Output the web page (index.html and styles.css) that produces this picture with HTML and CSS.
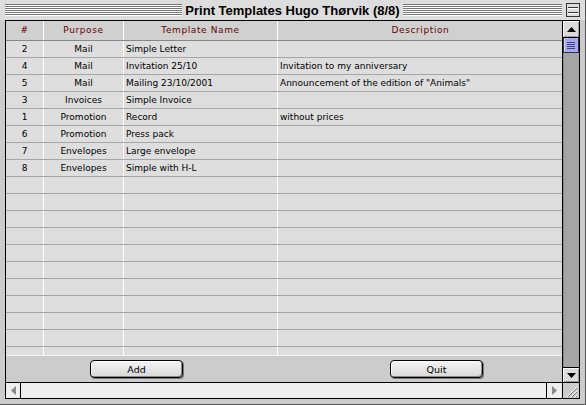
FILE: index.html
```html
<!DOCTYPE html>
<html>
<head>
<meta charset="utf-8">
<link rel="stylesheet" href="styles.css">
</head>
<body>
<div class="window">
  <div class="titlebar">
    <div class="stripes"></div>
    <div class="title">Print Templates Hugo Thørvik (8/8)</div>
    <div class="tright">
      <div class="stripes"></div>
      <div class="collapse"><span></span><span></span></div>
    </div>
  </div>
  <div class="frame">
    <div class="upper">
      <div class="main">
        <div class="list">
          <div class="row head">
            <div class="c c1">#</div>
            <div class="c c2">Purpose</div>
            <div class="c c3">Template Name</div>
            <div class="c c4 center">Description</div>
          </div>
          <div class="row"><div class="c c1">2</div><div class="c c2">Mail</div><div class="c c3">Simple Letter</div><div class="c c4"></div></div>
          <div class="row"><div class="c c1">4</div><div class="c c2">Mail</div><div class="c c3">Invitation 25/10</div><div class="c c4">Invitation to my anniversary</div></div>
          <div class="row"><div class="c c1">5</div><div class="c c2">Mail</div><div class="c c3">Mailing 23/10/2001</div><div class="c c4">Announcement of the edition of "Animals"</div></div>
          <div class="row"><div class="c c1">3</div><div class="c c2">Invoices</div><div class="c c3">Simple Invoice</div><div class="c c4"></div></div>
          <div class="row"><div class="c c1">1</div><div class="c c2">Promotion</div><div class="c c3">Record</div><div class="c c4">without prices</div></div>
          <div class="row"><div class="c c1">6</div><div class="c c2">Promotion</div><div class="c c3">Press pack</div><div class="c c4"></div></div>
          <div class="row"><div class="c c1">7</div><div class="c c2">Envelopes</div><div class="c c3">Large envelope</div><div class="c c4"></div></div>
          <div class="row"><div class="c c1">8</div><div class="c c2">Envelopes</div><div class="c c3">Simple with H-L</div><div class="c c4"></div></div>
          <div class="row"><div class="c c1"></div><div class="c c2"></div><div class="c c3"></div><div class="c c4"></div></div>
          <div class="row"><div class="c c1"></div><div class="c c2"></div><div class="c c3"></div><div class="c c4"></div></div>
          <div class="row"><div class="c c1"></div><div class="c c2"></div><div class="c c3"></div><div class="c c4"></div></div>
          <div class="row"><div class="c c1"></div><div class="c c2"></div><div class="c c3"></div><div class="c c4"></div></div>
          <div class="row"><div class="c c1"></div><div class="c c2"></div><div class="c c3"></div><div class="c c4"></div></div>
          <div class="row"><div class="c c1"></div><div class="c c2"></div><div class="c c3"></div><div class="c c4"></div></div>
          <div class="row"><div class="c c1"></div><div class="c c2"></div><div class="c c3"></div><div class="c c4"></div></div>
          <div class="row"><div class="c c1"></div><div class="c c2"></div><div class="c c3"></div><div class="c c4"></div></div>
          <div class="row"><div class="c c1"></div><div class="c c2"></div><div class="c c3"></div><div class="c c4"></div></div>
          <div class="row"><div class="c c1"></div><div class="c c2"></div><div class="c c3"></div><div class="c c4"></div></div>
          <div class="row"><div class="c c1"></div><div class="c c2"></div><div class="c c3"></div><div class="c c4"></div></div>
        </div>
        <div class="buttons">
          <button class="btn add">Add</button>
          <button class="btn quit">Quit</button>
        </div>
      </div>
      <div class="vscroll">
        <div class="arrow up"><svg width="9" height="5" viewBox="0 0 9 5"><polygon points="0,5 9,5 4.5,0" fill="#000"/></svg></div>
        <div class="track">
          <div class="thumb"><span></span><span></span><span></span><span></span></div>
        </div>
        <div class="arrow down"><svg width="9" height="5" viewBox="0 0 9 5"><polygon points="0,0 9,0 4.5,5" fill="#000"/></svg></div>
      </div>
    </div>
    <div class="hscroll">
      <div class="harrow left"><svg width="5" height="9" viewBox="0 0 5 9"><polygon points="5,0 5,9 0,4.5" fill="#8a8a8a"/></svg></div>
      <div class="htrack"></div>
      <div class="harrow right"><svg width="5" height="9" viewBox="0 0 5 9"><polygon points="0,0 0,9 5,4.5" fill="#8a8a8a"/></svg></div>
      <div class="grow"><svg width="14" height="14" viewBox="0 0 14 14"><path d="M3 13 L13 3 M7 13 L13 7 M11 13 L13 11" stroke="#fff" stroke-width="1"/><path d="M4 13 L13 4 M8 13 L13 8 M12 13 L13 12" stroke="#777" stroke-width="1"/></svg></div>
    </div>
  </div>
</div>
</body>
</html>
```

FILE: styles.css
```css
* { box-sizing: border-box; }
html, body { margin: 0; padding: 0; }
body { background: #ccc; font-family: "DejaVu Sans", Verdana, sans-serif; }

.window {
  width: 586px;
  height: 405px;
  background: #cccccc;
  padding: 0 5px 5px 5px;
  border-right: 1px solid #555;
  border-bottom: 1px solid #555;
  display: flex;
  flex-direction: column;
}

.titlebar {
  height: 20px;
  display: grid;
  grid-template-columns: 1fr auto 1fr;
  align-items: center;
  background: #dddddd;
  margin: 0 -5px;
  padding: 0 5px;
}
.tright { display: flex; align-items: center; }
.stripes {
  flex: 1;
  height: 12px;
  background: repeating-linear-gradient(to bottom, #777 0 1px, #fff 1px 2px);
}
.title {
  font-family: "Liberation Sans", Arial, sans-serif;
  font-weight: bold;
  font-size: 13px;
  padding: 0 3px;
  color: #000;
  white-space: nowrap;
}
.collapse {
  width: 14px;
  height: 14px;
  margin-left: 4px;
  border: 1px solid #333;
  background: #ddd;
  display: flex;
  flex-direction: column;
  justify-content: center;
  gap: 3px;
  padding: 0 1px;
}
.collapse span { display: block; height: 2px; border-top: 1px solid #333; border-bottom: 1px solid #fff; }

.frame {
  flex: 1;
  border: 1px solid #000;
  display: flex;
  flex-direction: column;
  background: #ccc;
}
.upper { flex: 1; display: flex; min-height: 0; }
.main { flex: 1; display: flex; flex-direction: column; min-width: 0; }

.list {
  height: 335px;
  overflow: hidden;
  background: #dedede;
  border-bottom: 1px solid #f2f2f2;
}
.row {
  display: grid;
  grid-template-columns: 38px 80px 154px 285px;
  height: 17px;
  border-bottom: 1px solid #a6a6a6;
  font-size: 9px;
  color: #000;
}
.row.head {
  height: 20px;
  background: #d0d0d0;
  color: #660000;
  letter-spacing: 0.6px;
  border-bottom: 1px solid #888;
}
.c {
  border-right: 1px solid #fff;
  white-space: nowrap;
  overflow: hidden;
  display: flex;
  align-items: center;
  line-height: 1;
}
.c4 { border-right: none; }
.c1, .c2 { justify-content: center; }
.c3, .c4 { padding-left: 2px; }
.c4.center { justify-content: center; padding-left: 0; }
.row.head .c3 { justify-content: center; padding-left: 0; }

.buttons {
  flex: 1;
  display: grid;
  grid-template-columns: 84px 93px 207px 93px;
  align-items: center;
  background: #cccccc;
}
.btn {
  grid-row: 1;
  height: 18px;
  font-family: "DejaVu Sans", sans-serif;
  font-size: 9.5px;
  color: #000;
  background: linear-gradient(#f4f4f4, #d8d8d8);
  border: 1px solid #000;
  border-radius: 4px;
  box-shadow: inset -1px -1px 0 #888, inset 1px 1px 0 #fff, 1px 1px 0 #777;
  padding: 0;
}
.add { grid-column: 2; }
.quit { grid-column: 4; }

.vscroll {
  width: 17px;
  border-left: 1px solid #000;
  display: flex;
  flex-direction: column;
  background: #a5a5a5;
}
.arrow {
  height: 16px;
  background: #dcdcdc;
  display: flex;
  align-items: center;
  justify-content: center;
  box-shadow: inset 1px 1px 0 #fff, inset -1px -1px 0 #999;
}
.arrow.up { border-bottom: 1px solid #000; height: 17px; }
.arrow.down { border-top: 1px solid #000; height: 15px; }
.track { flex: 1; background: #a5a5a5; box-shadow: inset 1px 0 0 #888; }
.thumb {
  height: 15px;
  background: #a8a8f0;
  border: 1px solid #333;
  border-top: none;
  display: flex;
  flex-direction: column;
  justify-content: center;
  align-items: center;
  gap: 1px;
  box-shadow: inset 1px 0 0 #d8d8ff;
}
.thumb span { display: block; width: 8px; height: 1px; background: #44447a; }

.hscroll {
  height: 16px;
  border-top: 1px solid #000;
  display: flex;
  background: #eeeeee;
}
.harrow {
  width: 15px;
  display: flex;
  align-items: center;
  justify-content: center;
  background: #eeeeee;
}
.harrow.left { border-right: 1px solid #000; }
.harrow.right { border-left: 1px solid #000; width: 16px; }
.htrack { flex: 1; }
.grow {
  width: 17px;
  border-left: 1px solid #000;
  background: #cccccc;
  display: flex;
  align-items: center;
  justify-content: center;
}
```
